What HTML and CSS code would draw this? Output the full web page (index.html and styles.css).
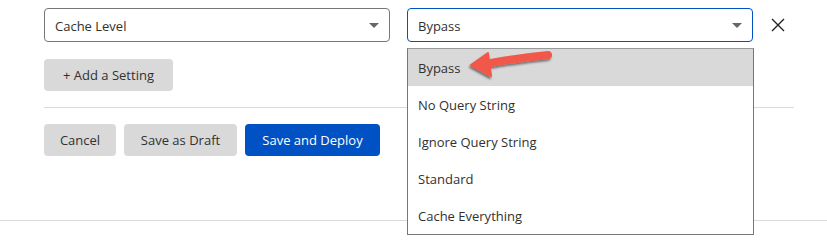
FILE: index.html
```html
<!DOCTYPE html>
<html>
<head>
  <title>Cache Rule</title>
  <link rel="stylesheet" href="styles.css">
</head>
<body>
  <div class="page">
    <div class="form">
      <div class="setting-row">
        <div class="select">
          <span class="select-value">Cache Level</span>
          <span class="caret"></span>
        </div>
        <div class="select-wrap">
          <div class="select open">
            <span class="select-value">Bypass</span>
            <span class="caret"></span>
          </div>
          <ul class="menu">
            <li class="menu-item selected">Bypass</li>
            <li class="menu-item">No Query String</li>
            <li class="menu-item">Ignore Query String</li>
            <li class="menu-item">Standard</li>
            <li class="menu-item">Cache Everything</li>
          </ul>
          <svg class="pointer" width="95" height="36" viewBox="0 0 95 36">
            <defs>
              <filter id="shadow" x="-20%" y="-40%" width="140%" height="180%">
                <feDropShadow dx="-1" dy="2" stdDeviation="1.2" flood-color="#000" flood-opacity="0.5"/>
              </filter>
            </defs>
            <g filter="url(#shadow)">
              <path d="M18 16 Q50 10 81 7" stroke="#f2584a" stroke-width="8" stroke-linecap="round" fill="none"/>
              <path d="M4 17 L21 5 L24 28 Z" fill="#f2584a" stroke="#f2584a" stroke-width="2" stroke-linejoin="round"/>
            </g>
          </svg>
        </div>
        <button class="remove" aria-label="Remove">
          <svg width="14" height="14" viewBox="0 0 14 14">
            <path d="M1 1 L13 13 M13 1 L1 13" stroke="#222" stroke-width="1.4"/>
          </svg>
        </button>
      </div>

      <button class="btn btn-gray add">+ Add a Setting</button>

      <div class="divider"></div>

      <div class="actions">
        <button class="btn btn-gray cancel">Cancel</button>
        <button class="btn btn-gray draft">Save as Draft</button>
        <button class="btn btn-blue deploy">Save and Deploy</button>
      </div>
    </div>
    <div class="footer-line"></div>
  </div>
</body>
</html>
```

FILE: styles.css
```css
body {
  margin: 0;
  padding: 0;
  font-family: 'Open Sans', 'Noto Sans', sans-serif;
  font-size: 13px;
  color: #313131;
  background-color: white;
}

.page {
  width: 827px;
  height: 246px;
  overflow: hidden;
}

.form {
  padding: 8px 0 0 44px;
  width: 750px;
}

.setting-row {
  display: flex;
  align-items: center;
  gap: 17px;
}

.select {
  width: 346px;
  height: 34px;
  box-sizing: border-box;
  border: 1px solid #777;
  border-radius: 4px;
  display: flex;
  align-items: center;
  justify-content: space-between;
  padding: 1px 10px 0 10px;
  background-color: white;
}

.select.open {
  border-color: #0051c3;
}

.caret {
  width: 0;
  height: 0;
  border-left: 5px solid transparent;
  border-right: 5px solid transparent;
  border-top: 5px solid #666;
}

.select-wrap {
  position: relative;
}

.menu {
  position: absolute;
  top: 40px;
  left: 0;
  width: 347px;
  margin: 0;
  padding: 0;
  list-style: none;
  box-sizing: border-box;
  border: 1px solid #777;
  border-top-color: #999;
  background-color: white;
  z-index: 2;
}

.menu-item {
  height: 37px;
  line-height: 38px;
  padding: 0 10px;
}

.menu-item.selected {
  background-color: #d9d9d9;
}

.pointer {
  position: absolute;
  top: 40px;
  left: 60px;
  z-index: 3;
}

.remove {
  background: none;
  border: none;
  padding: 0;
  margin-left: 1px;
  width: 14px;
  height: 14px;
  cursor: pointer;
  display: flex;
}

.btn {
  height: 32px;
  border: none;
  border-radius: 4px;
  padding: 0;
  font-family: inherit;
  font-size: 13px;
  cursor: pointer;
}

.btn-gray {
  background-color: #d9d9d9;
  color: #313131;
}

.btn-blue {
  background-color: #0051c3;
  color: white;
}

.add {
  margin-top: 17px;
  display: block;
  width: 129px;
}

.divider {
  height: 1px;
  background-color: #d9d9d9;
  margin-top: 16px;
}

.actions {
  display: flex;
  gap: 8px;
  margin-top: 16px;
}

.cancel {
  width: 72px;
}

.draft {
  width: 113px;
}

.deploy {
  width: 135px;
}

.footer-line {
  height: 1px;
  background-color: #d9d9d9;
  margin-top: 64px;
}
```
